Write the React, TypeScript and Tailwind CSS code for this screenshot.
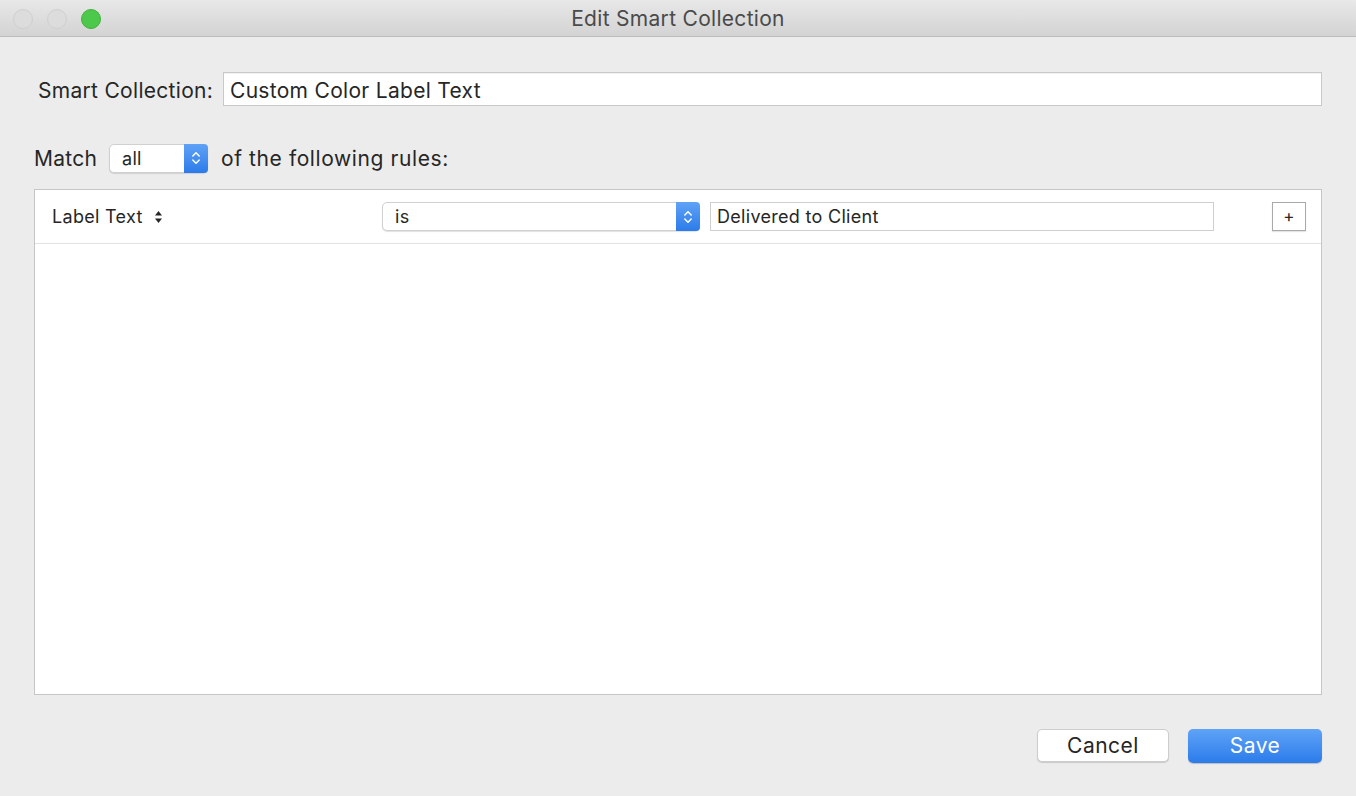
const font = { fontFamily: "Inter, 'Noto Sans', 'Liberation Sans', sans-serif" };

const Stepper = () => (
  <svg width="12" height="18" viewBox="0 0 12 18" className="block">
    <path d="M2.8 7 L6 3.8 L9.2 7" fill="none" stroke="white" strokeWidth="1.5" strokeLinecap="round" strokeLinejoin="round" />
    <path d="M2.8 11 L6 14.2 L9.2 11" fill="none" stroke="white" strokeWidth="1.5" strokeLinecap="round" strokeLinejoin="round" />
  </svg>
);

const UpDown = () => (
  <svg width="9" height="14" viewBox="0 0 9 14" className="block">
    <path d="M4.5 1 L8 5.5 L1 5.5 Z" fill="#262626" />
    <path d="M4.5 13 L8 8.5 L1 8.5 Z" fill="#262626" />
  </svg>
);

const PopUp = ({ value, className }: { value: string; className: string }) => (
  <div className={`flex h-[29px] items-stretch rounded-[5px] border border-[#d0d0d0] bg-white shadow-[0_1px_1px_rgba(0,0,0,0.12)] ${className}`}>
    <div className="flex flex-1 items-center pl-[12px] text-[18px] tracking-[0.3px] text-[#262626]">{value}</div>
    <div className="-my-px -mr-px flex w-[24px] items-center justify-center rounded-r-[4px] bg-gradient-to-b from-[#5fa2f6] to-[#2b7bea]">
      <Stepper />
    </div>
  </div>
);

export default function App() {
  return (
    <div className="h-[796px] w-[1356px] overflow-hidden bg-[#ececec] text-[#262626] tracking-[0.3px]" style={font}>
      {/* title bar */}
      <div className="relative flex h-[37px] items-center justify-center border-b border-[#bdbdbd] bg-gradient-to-b from-[#e8e8e8] to-[#d3d3d3]">
        <div className="absolute left-[13px] top-[9px] flex gap-[14px]">
          <div className="h-[20px] w-[20px] rounded-full border border-[#cfcfcf] bg-[#dcdcdc]" />
          <div className="h-[20px] w-[20px] rounded-full border border-[#cfcfcf] bg-[#dcdcdc]" />
          <div className="h-[20px] w-[20px] rounded-full border border-[#3fb23a] bg-[#4cc84a]" />
        </div>
        <span className="pt-[2px] text-[21px] text-[#4a4a4a]">Edit Smart Collection</span>
      </div>

      <div className="px-[34px]">
        {/* name row */}
        <div className="mt-[35px] flex items-center">
          <span className="ml-[4px] w-[185px] pt-[3px] text-[21px]">Smart Collection:</span>
          <div className="flex h-[34px] flex-1 items-center border border-[#c9c9c9] bg-white pl-[6px] pt-[2px] text-[21px] shadow-[inset_0_1px_0_rgba(0,0,0,0.05)]">
            Custom Color Label Text
          </div>
        </div>

        {/* match row */}
        <div className="mt-[36px] flex items-center">
          <span className="w-[75px] text-[21px]">Match</span>
          <PopUp value="all" className="w-[99px]" />
          <span className="ml-[13px] text-[21px] tracking-[0.6px]">of the following rules:</span>
        </div>

        {/* rules box */}
        <div className="mt-[15px] h-[506px] border border-[#c6c6c6] bg-white">
          <div className="flex h-[54px] items-center border-b border-[#e2e2e2]">
            <div className="ml-[17px] flex w-[330px] items-center gap-[11px] text-[18px]">
              Label Text
              <UpDown />
            </div>
            <PopUp value="is" className="w-[318px]" />
            <div className="ml-[10px] flex h-[29px] w-[504px] items-center border border-[#cfcfcf] pl-[6px] text-[18px]">
              Delivered to Client
            </div>
            <div className="ml-[58px] flex h-[29px] w-[34px] items-center justify-center border border-[#a9a9a9] bg-white text-[17px] shadow-[0_1px_1px_rgba(0,0,0,0.1)]">
              +
            </div>
          </div>
        </div>

        {/* buttons */}
        <div className="mt-[34px] flex justify-end gap-[19px]">
          <div className="flex h-[33px] w-[132px] items-center justify-center rounded-[5px] border border-[#cdcdcd] bg-white text-[21px] tracking-[0.5px] shadow-[0_1px_1px_rgba(0,0,0,0.15)]">
            Cancel
          </div>
          <div className="flex h-[34px] w-[134px] items-center justify-center rounded-[5px] bg-gradient-to-b from-[#5ea3f7] to-[#2a7bea] text-[21px] tracking-[0.5px] text-white shadow-[0_1px_1px_rgba(0,0,0,0.2)]">
            Save
          </div>
        </div>
      </div>
    </div>
  );
}
